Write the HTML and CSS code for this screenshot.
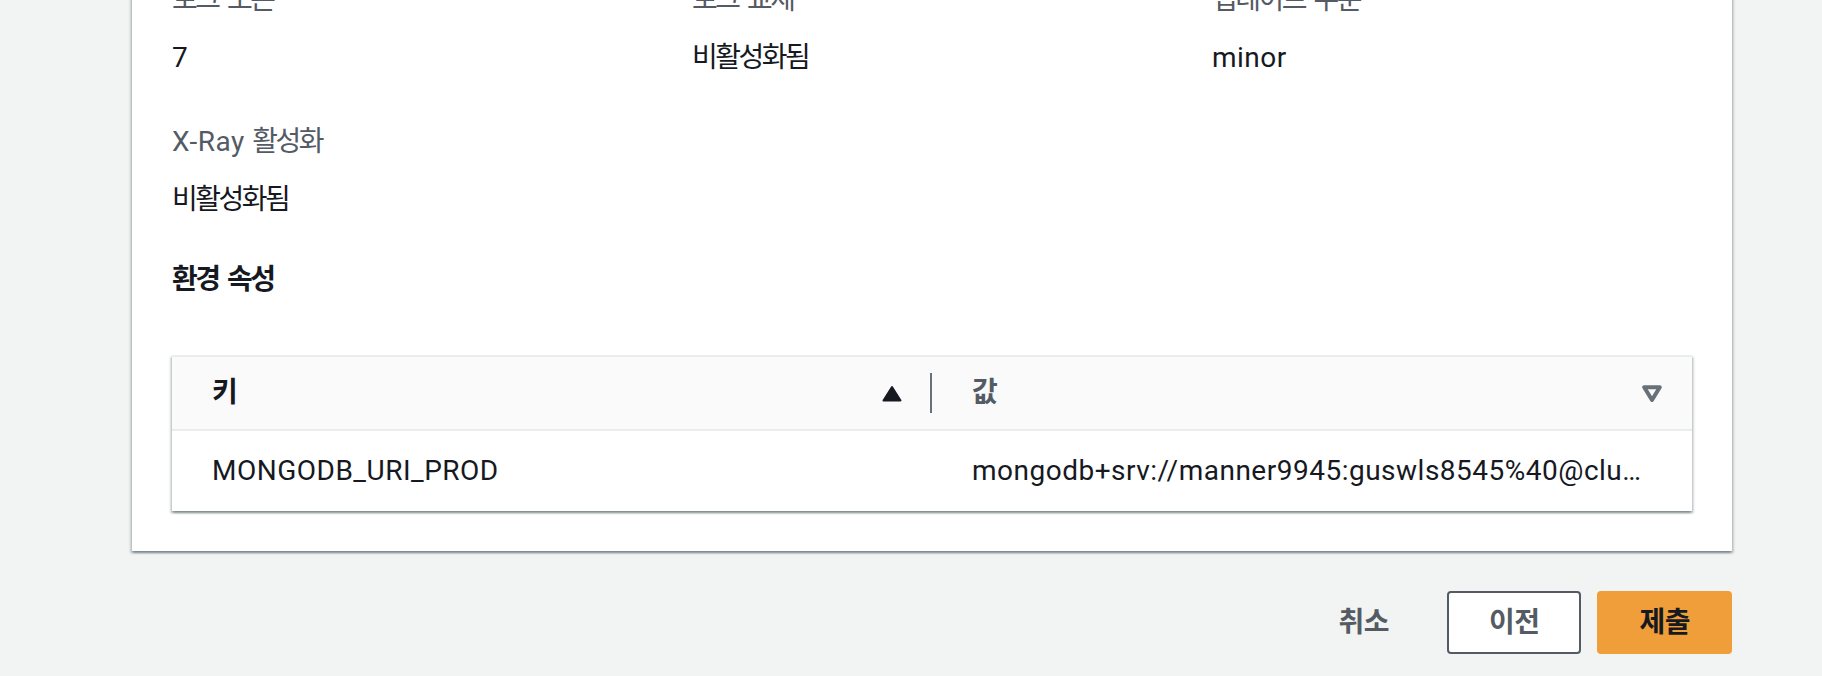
FILE: index.html
```html
<!DOCTYPE html>
<html lang="ko">
<head>
<meta charset="utf-8">
<title>검토</title>
<link rel="stylesheet" href="styles.css">
</head>
<body>
<div class="page">
  <section class="card">
    <div class="kv-grid">
      <div class="kv">
        <div class="kv-label"><span class="ko">로그 보존</span></div>
        <div class="kv-value">7</div>
      </div>
      <div class="kv">
        <div class="kv-label"><span class="ko">로그 교체</span></div>
        <div class="kv-value"><span class="ko">비활성화됨</span></div>
      </div>
      <div class="kv">
        <div class="kv-label"><span class="ko">업데이트 수준</span></div>
        <div class="kv-value">minor</div>
      </div>
      <div class="kv">
        <div class="kv-label">X-Ray <span class="ko">활성화</span></div>
        <div class="kv-value"><span class="ko">비활성화됨</span></div>
      </div>
    </div>

    <h2 class="section-title"><span class="ko">환경 속성</span></h2>

    <div class="table">
      <div class="table-head">
        <div class="th th-sorted">
          <span class="th-text ko">키</span>
          <svg class="sort-icon" width="20" height="17" viewBox="0 0 20 17" aria-hidden="true">
            <polygon points="10,2 18.5,15.5 1.5,15.5" fill="#16191f" stroke="#16191f" stroke-width="2" stroke-linejoin="round"/>
          </svg>
          <span class="th-divider"></span>
        </div>
        <div class="th">
          <span class="th-text ko">값</span>
          <svg class="sort-icon" width="20" height="17" viewBox="0 0 20 17" aria-hidden="true">
            <polygon points="2.2,2.2 17.8,2.2 10,15" fill="none" stroke="#687078" stroke-width="4" stroke-linejoin="round"/>
          </svg>
        </div>
      </div>
      <div class="table-row">
        <div class="td">MONGODB_URI_PROD</div>
        <div class="td">mongodb+srv://manner9945:guswls8545%40@cluster0.mongodb.net/production?retryWrites=true&amp;w=majority</div>
      </div>
    </div>
  </section>

  <div class="actions">
    <button class="btn btn-link" type="button"><span class="ko">취소</span></button>
    <button class="btn btn-normal" type="button"><span class="ko">이전</span></button>
    <button class="btn btn-primary" type="button"><span class="ko">제출</span></button>
  </div>
</div>
</body>
</html>
```

FILE: styles.css
```css
* {
  box-sizing: border-box;
}

html, body {
  margin: 0;
  padding: 0;
  background: #f2f3f3;
}

body {
  font-family: Roboto, "Noto Sans CJK KR", sans-serif;
  font-size: 28px;
  line-height: 44px;
  letter-spacing: 0.5px;
  color: #16191f;
  overflow: hidden;
}

.ko {
  letter-spacing: -2.5px;
  word-spacing: 4px;
}

.page {
  padding: 0 90px 0 132px;
  min-height: 676px;
}

.card {
  margin-top: -62px;
  background: #ffffff;
  padding: 40px;
  box-shadow: 0 2px 2px 0 rgba(0, 28, 36, 0.3),
              2px 2px 2px 0 rgba(0, 28, 36, 0.15),
              -2px 2px 2px 0 rgba(0, 28, 36, 0.15);
}

.kv-grid {
  display: grid;
  grid-template-columns: repeat(3, 480px);
  column-gap: 40px;
  row-gap: 40px;
}

.kv-label {
  color: #545b64;
  margin-bottom: 14px;
}

.kv-value {
  color: #16191f;
}

.section-title {
  margin: 36px 0 53px;
  font-size: 28px;
  line-height: 44px;
  font-weight: 700;
  color: #16191f;
}

.table {
  background: #ffffff;
  border-top: 2px solid #eaeded;
  box-shadow: 0 2px 2px 0 rgba(0, 28, 36, 0.3),
              2px 2px 2px 0 rgba(0, 28, 36, 0.15),
              -2px 2px 2px 0 rgba(0, 28, 36, 0.15);
}

.table-head {
  display: grid;
  grid-template-columns: 1fr 1fr;
  height: 74px;
  background: #fafafa;
  border-bottom: 2px solid #eaeded;
}

.th {
  display: flex;
  align-items: center;
  padding: 0 30px 0 40px;
  font-weight: 700;
  color: #545b64;
}

.th-sorted {
  color: #16191f;
  padding-right: 0;
}

.th-text {
  flex: 1;
}

.sort-icon {
  display: block;
  flex: none;
}

.th-sorted .sort-icon {
  margin-right: 28px;
}

.th-divider {
  flex: none;
  width: 2px;
  height: 40px;
  background: #687078;
}

.table-row {
  display: grid;
  grid-template-columns: 1fr 1fr;
  height: 80px;
}

.td {
  padding: 0 40px;
  line-height: 80px;
  white-space: nowrap;
  overflow: hidden;
  text-overflow: ellipsis;
  color: #16191f;
}

.actions {
  display: flex;
  justify-content: flex-end;
  gap: 16px;
  margin-top: 40px;
}

.btn {
  font-family: Roboto, "Noto Sans CJK KR", sans-serif;
  font-size: 28px;
  line-height: 43px;
  font-weight: 700;
  padding: 8px 40px;
  border: 2px solid transparent;
  border-radius: 4px;
  background: transparent;
  cursor: pointer;
}

.btn .ko {
  letter-spacing: -0.5px;
}

.btn-link {
  color: #545b64;
}

.btn-normal {
  background: #ffffff;
  border-color: #545b64;
  color: #545b64;
}

.btn-primary {
  background: #f09e3a;
  border-color: #f09e3a;
  color: #16191f;
}
```
